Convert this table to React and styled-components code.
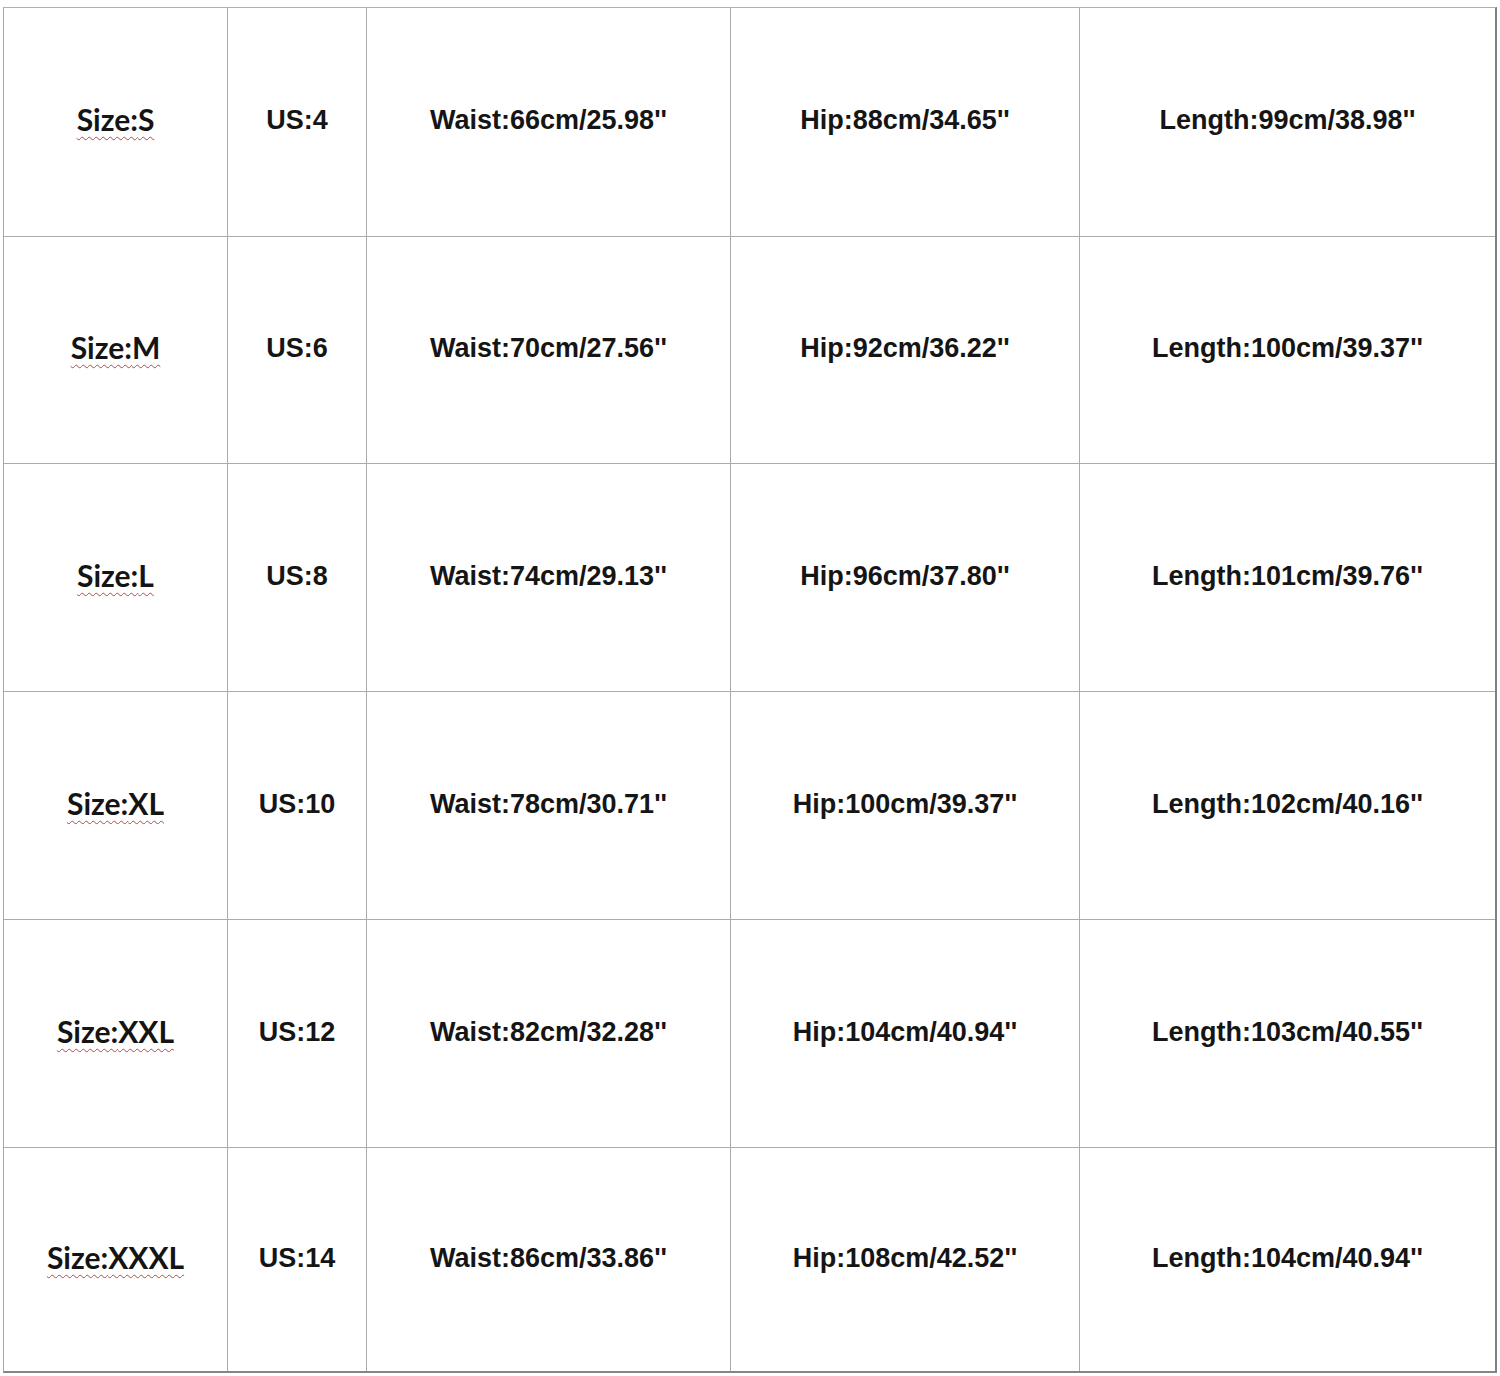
import React from "react";
import styled, { createGlobalStyle } from "styled-components";

const Global = createGlobalStyle`
  html, body { margin: 0; padding: 0; background: #ffffff; }
  body { width: 1500px; height: 1376px; overflow: hidden; }
`;

const Page = styled.div`
  padding: 7px 0 0 3px;
`;

const Grid = styled.div`
  display: grid;
  grid-template-columns: 223px 138px 363px 348px 415px;
  grid-template-rows: 228px 226px 227px 227px 227px 223px;
  gap: 1px;
  width: max-content;
  background: #ababab;
  border-top: 1px solid #b0b0b0;
  border-left: 1px solid #a8a8a8;
  border-right: 2px solid #808080;
  border-bottom: 2px solid #858585;
`;

const Cell = styled.div`
  background: #ffffff;
  display: flex;
  align-items: center;
  justify-content: center;
  padding-bottom: ${(p) => (p.$size ? "6px" : "3px")};
  box-sizing: border-box;
`;

const Label = styled.span`
  font-family: "Liberation Sans", Arial, sans-serif;
  font-weight: 700;
  font-size: 27px;
  color: #151515;
  white-space: nowrap;
`;

const SizeLabel = styled.span`
  font-family: Lato, "Open Sans", sans-serif;
  font-weight: 700;
  font-size: 30px;
  color: #141414;
  white-space: nowrap;
  text-decoration: underline wavy #a8504c;
  text-decoration-thickness: 1px;
  text-underline-offset: 5px;
`;

const rows = [
  ["S", "4", "66cm/25.98", "88cm/34.65", "99cm/38.98"],
  ["M", "6", "70cm/27.56", "92cm/36.22", "100cm/39.37"],
  ["L", "8", "74cm/29.13", "96cm/37.80", "101cm/39.76"],
  ["XL", "10", "78cm/30.71", "100cm/39.37", "102cm/40.16"],
  ["XXL", "12", "82cm/32.28", "104cm/40.94", "103cm/40.55"],
  ["XXXL", "14", "86cm/33.86", "108cm/42.52", "104cm/40.94"],
];

export default function App() {
  return (
    <>
      <Global />
      <Page>
        <Grid>
          {rows.map(([size, us, waist, hip, len]) => (
            <React.Fragment key={size}>
              <Cell $size>
                <SizeLabel>Size:{size}</SizeLabel>
              </Cell>
              <Cell>
                <Label>US:{us}</Label>
              </Cell>
              <Cell>
                <Label>Waist:{waist}''</Label>
              </Cell>
              <Cell>
                <Label>Hip:{hip}''</Label>
              </Cell>
              <Cell>
                <Label>Length:{len}''</Label>
              </Cell>
            </React.Fragment>
          ))}
        </Grid>
      </Page>
    </>
  );
}
